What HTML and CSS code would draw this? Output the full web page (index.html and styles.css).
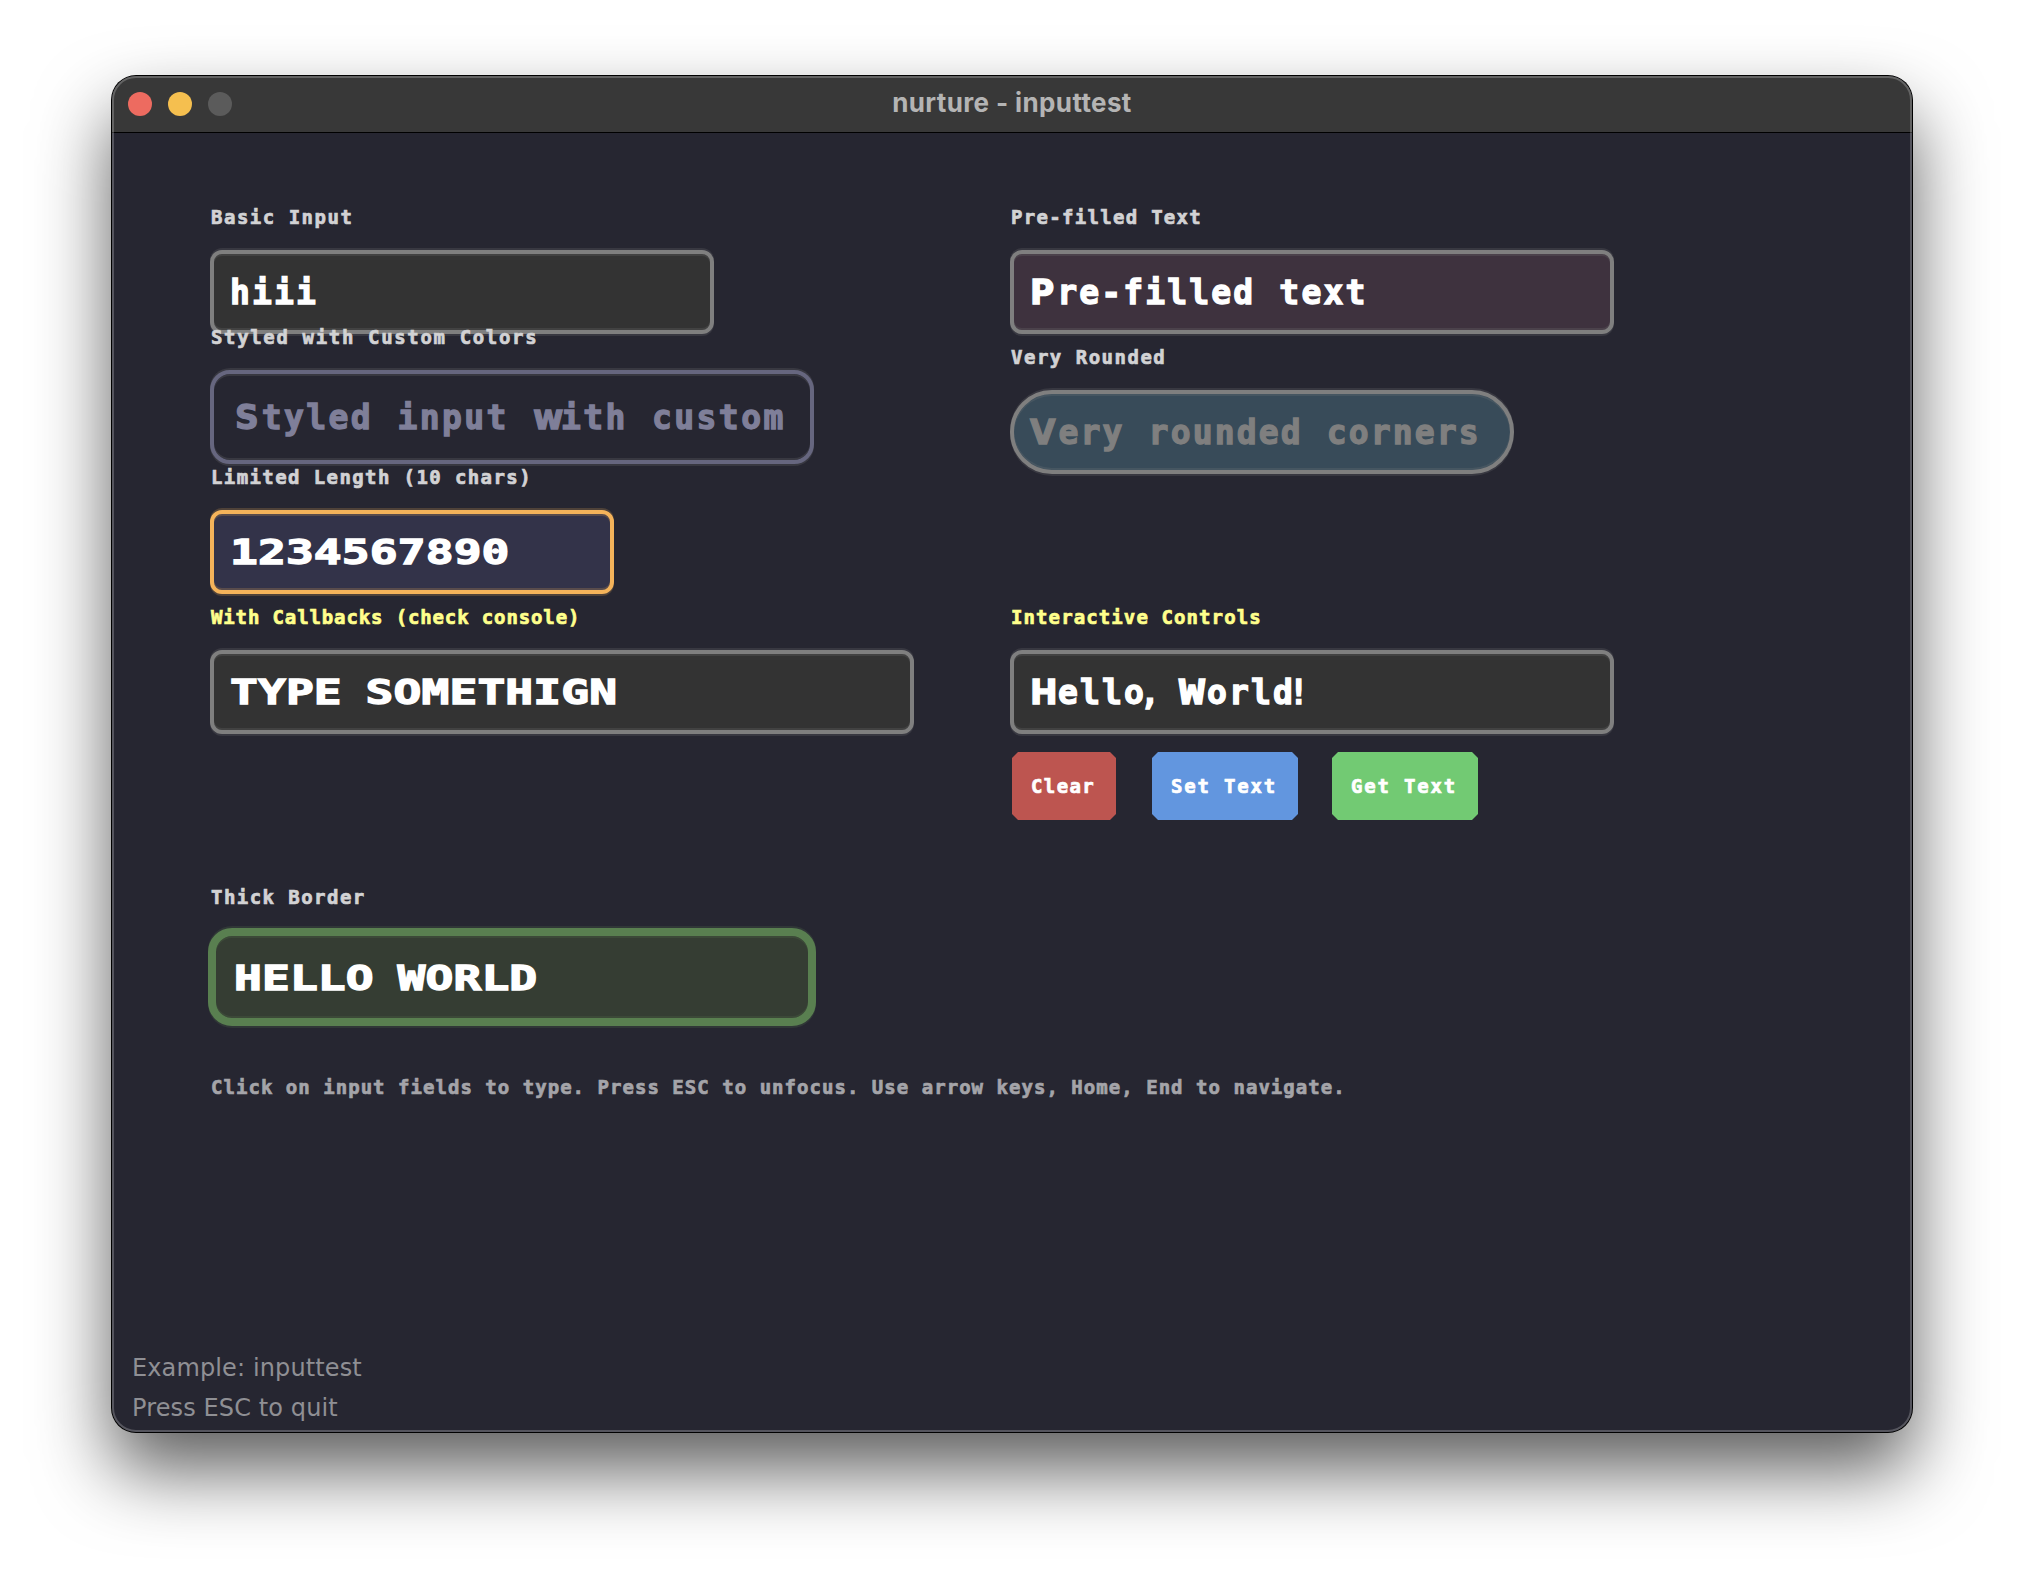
FILE: index.html
```html
<!DOCTYPE html>
<html lang="en">
<head>
<meta charset="utf-8">
<title>nurture - inputtest</title>
<link rel="stylesheet" href="styles.css">
</head>
<body>
<main class="window">
  <header class="titlebar">
    <div class="lights"><i class="light close"></i><i class="light minimize"></i><i class="light zoom"></i></div>
    <h1 class="title">nurture - inputtest</h1>
  </header>
  <div class="columns">
    <section class="column">
      <div class="label l-basic">Basic Input</div>
      <div class="field w-500"><span class="value">hiii</span></div>
      <div class="label l-styled">Styled with Custom Colors</div>
      <div class="field styled"><span class="value"><span class="cap">S</span>tyled input <span class="low-w">w</span>ith custom</span></div>
      <div class="label l-limited">Limited Length (10 chars)</div>
      <div class="field limited"><span class="value wide">1234567890</span></div>
      <div class="label accent l-callbacks">With Callbacks (check console)</div>
      <div class="field w-700"><span class="value wide">TYPE SOMETHIGN</span></div>
      <div class="label l-thick">Thick Border</div>
      <div class="field thick"><span class="value wide">HELLO WORLD</span></div>
    </section>
    <section class="column">
      <div class="label l-prefilled">Pre-filled Text</div>
      <div class="field w-600 plum"><span class="value"><span class="cap">P</span>re-filled text</span></div>
      <div class="label l-rounded">Very Rounded</div>
      <div class="field w-500 rounded"><span class="value"><span class="cap">V</span>ery rounded corners</span></div>
      <div class="label accent l-controls">Interactive Controls</div>
      <div class="field w-600"><span class="value"><span class="cap cap-h">H</span>ell<span class="tight">o</span><span class="comma">,</span> <span class="cap-w">W</span>orl<span class="tight">d</span>!</span></div>
      <div class="buttons">
        <button class="button red">Clear</button>
        <button class="button blue">Set Text</button>
        <button class="button green">Get Text</button>
      </div>
    </section>
  </div>
  <p class="hint">Click on input fields to type. Press ESC to unfocus. Use arrow keys, Home, End to navigate.</p>
  <footer class="status">
    <div>Example: inputtest</div>
    <div>Press ESC to quit</div>
  </footer>
</main>
</body>
</html>
```
FILE: styles.css
```css
* { box-sizing: border-box; }
body {
  margin: 0;
  width: 2024px;
  height: 1580px;
  padding: 76px 112px;
  overflow: hidden;
  background: #fff;
  font-family: "DejaVu Sans Mono", monospace;
}
.window {
  position: relative;
  display: flex;
  flex-direction: column;
  width: 1800px;
  height: 1356px;
  border-radius: 24px;
  background: #262631;
  box-shadow: 0 0 0 1px #000, 0 38px 74px rgba(0, 0, 0, .64);
}
.window::after {
  content: "";
  position: absolute;
  inset: 0;
  border: 2px solid rgba(255, 255, 255, .22);
  border-radius: 24px;
  pointer-events: none;
}
.titlebar {
  display: grid;
  grid-template-columns: 1fr auto 1fr;
  align-items: center;
  height: 57px;
  flex: none;
  padding: 0 16px;
  border-bottom: 1px solid #000;
  border-radius: 24px 24px 0 0;
  background: #383838;
}
.lights { display: flex; gap: 16px; }
.light { width: 24px; height: 24px; border-radius: 50%; }
.close { background: #ed6b60; }
.minimize { background: #f5bf4f; }
.zoom { background: #5b5b5b; }
.title {
  margin: -2px 0 0;
  color: #b4b4b4;
  font: 700 26px/32px Inter, sans-serif;
  letter-spacing: .38px;
}
.columns {
  display: grid;
  grid-template-columns: 800px 800px;
  padding: 72px 0 0 98px;
}
.column { display: flex; flex-direction: column; align-items: flex-start; }
.label {
  position: relative;
  height: 24px;
  margin: 0 0 21px 1px;
  color: #d2d2d4;
  font-size: 19px;
  font-weight: 700;
  line-height: 24px;
  white-space: pre;
  -webkit-text-stroke: .7px;
}
.accent { color: #ffff8c; }
.l-basic { letter-spacing: 1.5px; }
.l-styled { margin-top: -9px; letter-spacing: 1.65px; }
.l-limited { margin-top: 1px; letter-spacing: 1.4px; }
.l-callbacks { margin-top: 11px; letter-spacing: .87px; }
.l-thick { margin-top: 151px; margin-bottom: 19px; letter-spacing: 1.45px; }
.l-prefilled { letter-spacing: 1.3px; }
.l-rounded { margin-top: 11px; letter-spacing: 1.5px; }
.l-controls { margin-top: 131px; letter-spacing: 1.1px; }
.field {
  --edge: #7f7f7f;
  --halo: rgba(128, 128, 128, .2);
  display: flex;
  align-items: center;
  height: 84px;
  padding: 2px 0 0 16px;
  border: 4px solid var(--edge);
  border-radius: 12px;
  background: #333;
  color: #fff;
  box-shadow: 0 -2px var(--halo), 0 2px var(--halo), inset 0 2px var(--halo), inset 0 -2px var(--halo);
}
.w-500 { width: 504px; }
.w-600 { width: 604px; }
.w-700 { width: 704px; }
.plum { background: #3e323e; }
.styled {
  --edge: #66667f;
  width: 604px;
  height: 94px;
  padding-left: 21px;
  border-radius: 20px;
  background: #262631;
  color: #7f7f99;
}
.limited {
  --edge: #f4b35a;
  --halo: rgba(244, 179, 90, .2);
  width: 404px;
  background: #333349;
}
.rounded { border-radius: 42px; background: #384b59; color: #7f7f7f; }
.thick {
  --edge: #597f50;
  --halo: rgba(89, 127, 80, .2);
  width: 608px;
  height: 98px;
  margin-left: -2px;
  padding: 4px 0 0 18px;
  border-width: 8px;
  border-radius: 24px;
  background: #353d33;
}
.value {
  font-size: 33px;
  font-weight: 700;
  line-height: 40px;
  letter-spacing: 2.15px;
  word-spacing: 2px;
  white-space: pre;
  -webkit-text-stroke: 1.3px;
}
.wide {
  letter-spacing: .1px;
  word-spacing: -3px;
  transform: scaleX(1.4);
  transform-origin: left;
}
.styled .value { letter-spacing: 2.4px; }
.value .cap { font-family: "DejaVu Sans", sans-serif; letter-spacing: 3px; }
.value .cap-h { letter-spacing: .4px; }
.cap-w {
  display: inline-block;
  width: 28px;
  letter-spacing: 0;
  transform: scaleX(1.3);
  transform-origin: left;
}
.value .low-w { font-family: "DejaVu Sans", sans-serif; letter-spacing: -2.5px; }
.tight { letter-spacing: -4px; }
.comma { letter-spacing: -5px; }
.buttons { display: flex; margin: 18px 0 0 2px; }
.button {
  height: 68px;
  margin: 0;
  padding: 0 0 0 19px;
  border: 0;
  clip-path: polygon(6px 0, calc(100% - 6px) 0, 100% 6px, 100% calc(100% - 6px), calc(100% - 6px) 100%, 6px 100%, 0 calc(100% - 6px), 0 6px);
  color: #fff;
  font: 700 19px/24px "DejaVu Sans Mono", monospace;
  letter-spacing: 1.8px;
  text-align: left;
  white-space: pre;
  -webkit-text-stroke: .7px;
}
.red { width: 104px; margin-right: 36px; background: #bd5550; letter-spacing: 1.4px; }
.blue { width: 146px; margin-right: 34px; background: #6296df; }
.green { width: 146px; background: #72ca73; }
.hint {
  margin: 49px 0 0 99px;
  color: #a4a4a9;
  font-size: 19px;
  font-weight: 700;
  line-height: 24px;
  letter-spacing: 1.03px;
  white-space: pre;
  -webkit-text-stroke: .7px;
}
.status {
  margin: auto 0 4px 20px;
  color: #8f8f94;
  font: 24px/40px "DejaVu Sans", sans-serif;
  letter-spacing: .12px;
}
```
